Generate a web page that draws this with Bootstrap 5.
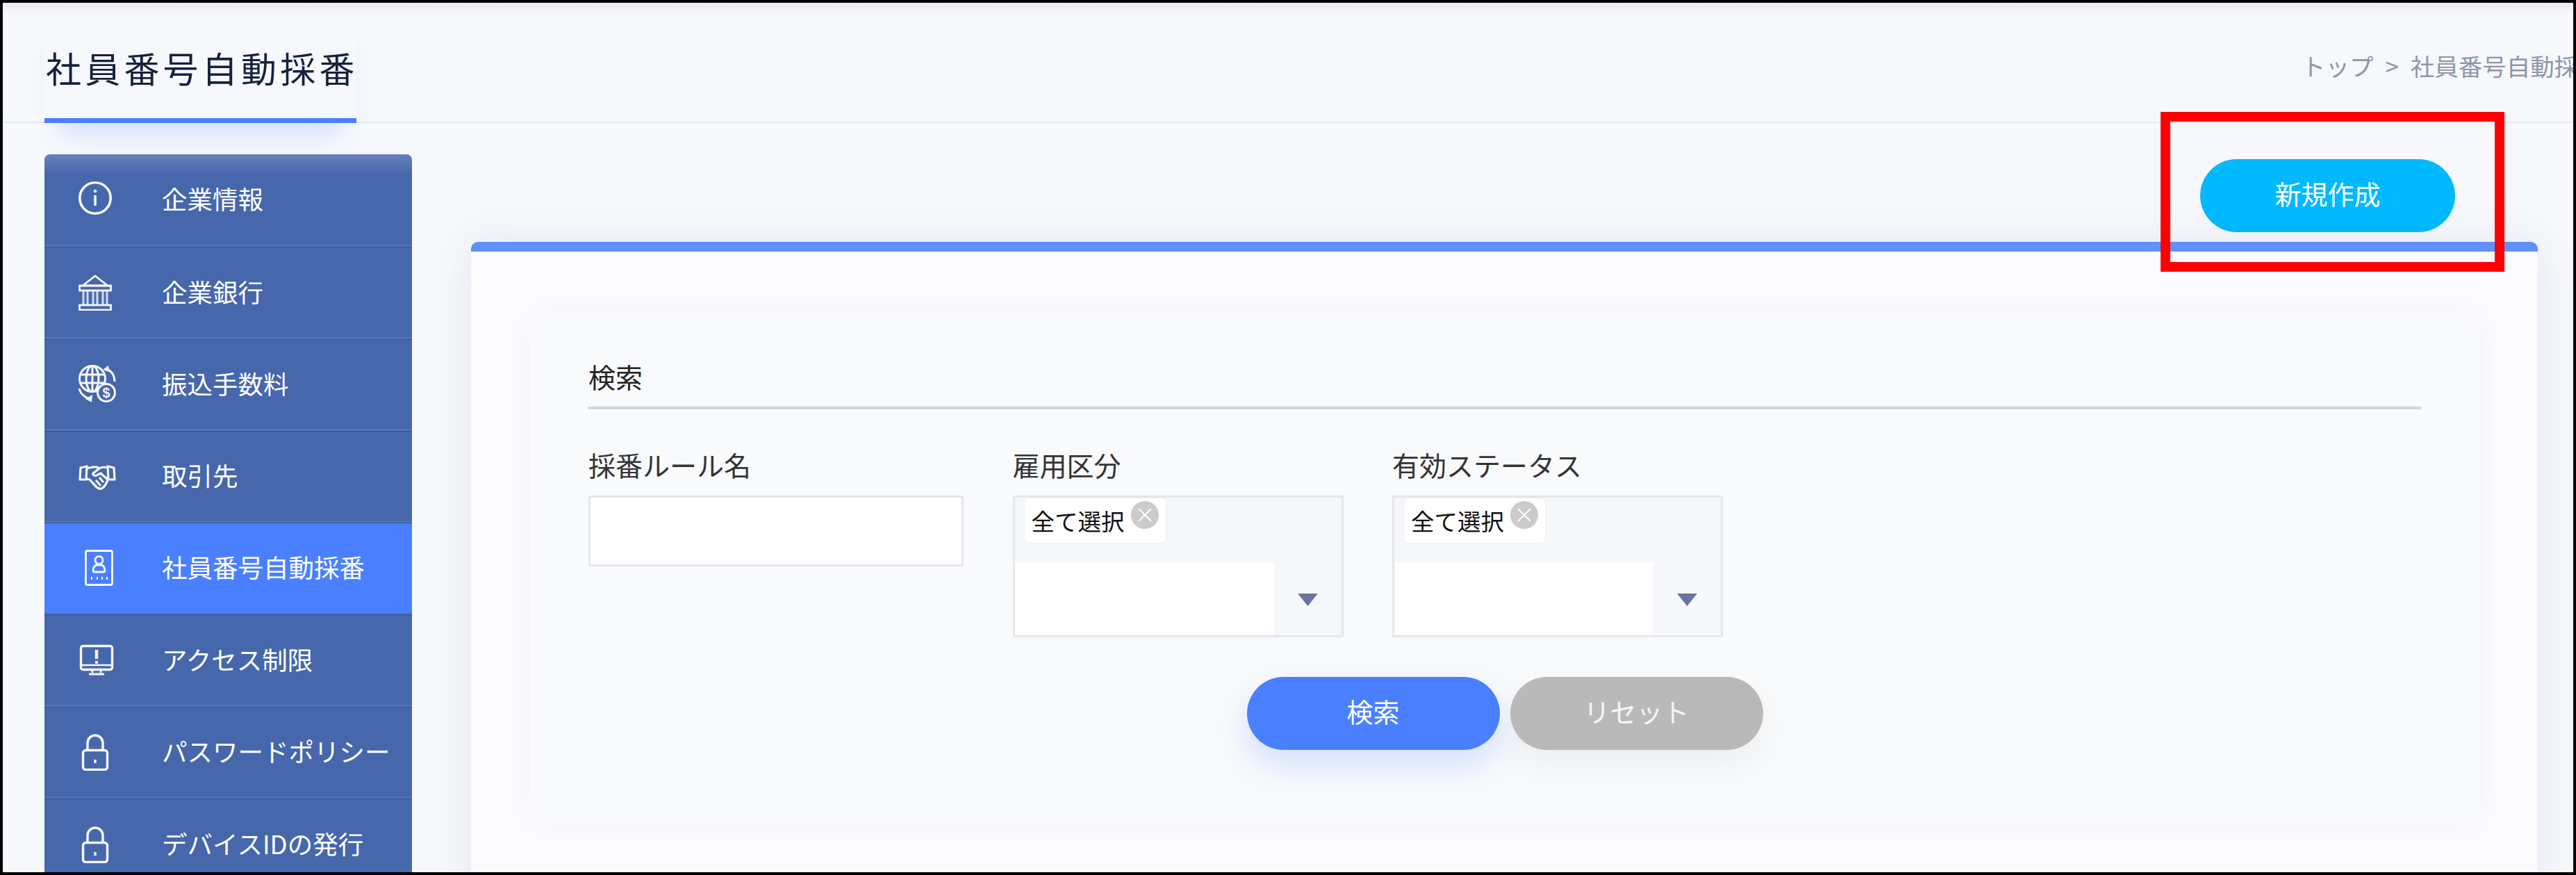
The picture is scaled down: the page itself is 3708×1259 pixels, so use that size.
<!DOCTYPE html>
<html lang="ja">
<head>
<meta charset="utf-8">
<title>社員番号自動採番</title>
<link href="https://cdn.jsdelivr.net/npm/bootstrap@5.3.0/dist/css/bootstrap.min.css" rel="stylesheet">
<style>
html,body{height:100%;margin:0;overflow:hidden;background:#000}
body{font-family:"Noto Sans CJK JP","Noto Sans",sans-serif;font-weight:400;color:#333}
.frame{height:100vh;border:4px solid #000;background:linear-gradient(#ecedf2,#f6f8fc 18px);overflow:hidden}
.top-bar{height:173px;border-bottom:2px solid #e4e8f1;padding-left:60px}
.page-title{height:173px;margin:0 0 -2px;padding:63px 4px 0 2px;width:449px;font-size:51px;font-weight:400;line-height:60px;letter-spacing:5.2px;white-space:nowrap;color:#16213e;border-bottom:7px solid #4a80ff;box-shadow:0 34px 36px -22px rgba(74,128,255,.22);flex:none}
.crumbs{width:391px;overflow:hidden;margin:8px 0 0 auto;flex:none}
.crumbs .breadcrumb{margin:0;flex-wrap:nowrap;white-space:nowrap;font-size:34.5px;line-height:48px;color:#8f96a9}
.crumbs .breadcrumb-item{color:#8f96a9;padding-left:0}
.crumbs .breadcrumb-item+.breadcrumb-item{padding-left:17px}
.crumbs .breadcrumb-item+.breadcrumb-item::before{content:">";color:#8f96a9;padding-right:17px;float:none}
.body-row{padding:45px 51px 0 60px}
.side-nav{width:529px;flex:none;border-radius:8px 8px 0 0;overflow:hidden}
.side-item{height:132.35px;padding:0 0 4px 49px;background:#4667ab;color:#fff;border:0;border-bottom:2px solid #34508f;box-shadow:inset 0 -3px 0 #5271b6;font-size:36.5px;line-height:1;font-weight:400;white-space:nowrap;border-radius:0}
.side-item:first-child{height:134.35px;background:linear-gradient(#6782bd,#4667ab 30px);border-radius:0}
.side-item.is-on{background:#4a80ff;box-shadow:none;border-bottom:3px solid #3f5f9f}
.side-ico{width:54px;height:54px;flex:none;margin-right:66px;color:#fff;filter:blur(.5px);opacity:.95}
.content-col{margin-left:85px;min-width:0}
.pill-btn{height:105px;width:364px;border:0;border-radius:53px;color:#fff;font-size:38px;font-weight:400;padding:0 0 8px;line-height:1}
.pill-btn:hover,.pill-btn:active{color:#fff}
.new-wrap{margin:7px 119px 14px 0}
.btn-new{width:367px;background:#00b9ff}
.btn-new:hover{background:#00b9ff}
.red-mark{position:absolute;z-index:2;left:-57px;right:-71px;top:-68px;bottom:-57px;border:14px solid #f00;pointer-events:none}
.main-card{border:0;border-top:14px solid #5f90fb;border-radius:10px 10px 0 0;background:#fbfbfd;padding:85px 83px 0 84px;box-shadow:0 0 60px rgba(80,90,140,.1);height:1000px}
.search-panel{background:#f9fafc;border-radius:30px;padding:71px 85px 111px 85px;box-shadow:0 0 30px rgba(80,90,140,.045)}
.panel-head{font-size:39px;line-height:46px;padding-bottom:21px;border-bottom:4px solid #d2d3de;font-weight:400;margin:0;color:#222}
.field-row{margin-top:55px;gap:70.5px}
.field-label{font-size:39px;line-height:48px;margin:0 0 21px;white-space:nowrap;color:#333}
.text-box{width:540px;height:102px;border:3px solid #e6e7ec;border-radius:0;background:#fff}
.pick-box{width:476px;height:204px;border:3px solid #e6e7ec;background:#f5f7fb}
.pick-tag{height:64px;margin:1px 0 0 14px;padding-left:10px;gap:9px;background:#fff;border-radius:7px;box-shadow:0 0 3px rgba(0,0,0,.06);font-size:33.5px;font-weight:400;color:#111;white-space:nowrap;width:203px;align-self:flex-start}
.pick-x{width:40px;height:40px;margin-top:-16px;flex:none}
.pick-in{height:105px}
.pick-field{width:373px;background:#fff}
.pick-arrow{width:29px;height:18px;margin:2px auto 0}
.action-row{margin-top:57px;gap:15px}
.btn-find{background:#4a80ff;box-shadow:0 22px 50px rgba(74,128,255,.22)}
.btn-find:hover{background:#4a80ff}
.btn-reset{background:#b9b9b9;box-shadow:0 22px 50px rgba(0,0,0,.05);color:#f6f6f6}
.btn-reset:hover{background:#b9b9b9}
</style>
</head>
<body>
<div class="frame d-flex flex-column">
  <header class="top-bar d-flex align-items-center flex-none">
    <h1 class="page-title">社員番号自動採番</h1>
    <nav class="crumbs" aria-label="breadcrumb">
      <ol class="breadcrumb">
        <li class="breadcrumb-item">トップ</li>
        <li class="breadcrumb-item active">社員番号自動採番</li>
      </ol>
    </nav>
  </header>
  <div class="body-row d-flex flex-grow-1">
    <div class="side-nav list-group list-group-flush">
      <a class="list-group-item side-item d-flex align-items-center">
        <svg class="side-ico" viewBox="0 0 54 54" fill="none" stroke="currentColor" stroke-width="3.6"><circle cx="24" cy="25" r="22.2"/><circle cx="24" cy="15" r="2.3" fill="currentColor" stroke="none"/><path d="M24 21v15"/></svg>企業情報</a>
      <a class="list-group-item side-item d-flex align-items-center">
        <svg class="side-ico" viewBox="0 0 54 54" fill="none" stroke="currentColor" stroke-width="2.8"><path d="M24 4 42 18H6Z"/><rect x="1.5" y="18" width="45" height="7"/><path d="M7 25v21M13 25v21M21 25v21M27 25v21M35 25v21M41 25v21" stroke-width="3" opacity=".8"/><rect x="1.5" y="46" width="45" height="7"/></svg>企業銀行</a>
      <a class="list-group-item side-item d-flex align-items-center">
        <svg class="side-ico" viewBox="0 0 54 54" fill="none" stroke="currentColor" stroke-width="3"><circle cx="20" cy="20" r="18.5"/><ellipse cx="20" cy="20" rx="9" ry="18.5"/><path d="M2 14h36M2 26h36M20 2v36"/><circle cx="40" cy="40" r="12.5" fill="#4667ab"/><text x="40" y="47" font-family="Liberation Sans,sans-serif" font-size="20" font-weight="700" text-anchor="middle" fill="currentColor" stroke="none">$</text><path d="M41 6c7 3 11 10 11 18"/><path d="M35 7l8-6 1 9Z" fill="currentColor" stroke="none"/><path d="M1 34c2 8 9 14 17 15"/><path d="M20 43l-1 11-9-5Z" fill="currentColor" stroke="none"/></svg>振込手数料</a>
      <a class="list-group-item side-item d-flex align-items-center">
        <svg class="side-ico" viewBox="0 0 54 54" fill="none" stroke="currentColor" stroke-width="3.2" stroke-linejoin="round"><path d="M3 15l9-2-1 19H2Z"/><path d="M51 15l-9-2 1 19h9Z"/><path d="M12 16c5-1 9-3 14-2l4 2c3-2 8-2 12-1"/><path d="M30 16l-9 7c-1 2 2 4 5 3l6-3 10 9"/><path d="M11 31l5 1 8 9c3 3 6 5 9 4 3-1 6-5 9-12"/><path d="M20 36l6 6M25 33l7 8M30 29l6 7" stroke-width="2.8"/></svg>取引先</a>
      <a class="list-group-item side-item is-on d-flex align-items-center">
        <svg class="side-ico" viewBox="0 0 54 54" fill="none" stroke="currentColor" stroke-width="2.8"><rect x="10.5" y="3.5" width="38" height="49" rx="2.5"/><circle cx="29.500" cy="17" r="5.500"/><path d="M21 32c0-5 3-8 5-8h7c2 0 5 3 5 8 0 2-1 2-2 2H23c-1 0-2 0-2-2Z"/><path d="M18 43h2M26 43h2M33 43h2M40 43h2" stroke-width="4"/></svg>社員番号自動採番</a>
      <a class="list-group-item side-item d-flex align-items-center">
        <svg class="side-ico" viewBox="0 0 54 54" fill="none" stroke="currentColor" stroke-width="3.4" opacity=".75"><rect x="3.500" y="7.500" width="45" height="34" rx="3"/><path d="M5 35h42" stroke-width="2.500"/><path d="M20 42v4M32 42v4M15 48h22" stroke-width="2.800"/><path d="M26 13v13" stroke-width="4.500"/><circle cx="26" cy="31" r="2.300" fill="currentColor" stroke="none"/></svg>アクセス制限</a>
      <a class="list-group-item side-item d-flex align-items-center">
        <svg class="side-ico" viewBox="0 0 54 54" fill="none" stroke="currentColor" stroke-width="3.5"><path d="M13 24V14a11 11 0 0 1 22 0v10"/><rect x="6.500" y="24.500" width="35" height="28" rx="4"/><path d="M24 38v5" stroke-width="3.500"/></svg>パスワードポリシー</a>
      <a class="list-group-item side-item d-flex align-items-center">
        <svg class="side-ico" viewBox="0 0 54 54" fill="none" stroke="currentColor" stroke-width="3.5"><path d="M13 24V14a11 11 0 0 1 22 0v10"/><rect x="6.500" y="24.500" width="35" height="28" rx="4"/><path d="M24 38v5" stroke-width="3.500"/></svg>デバイスIDの発行</a>
    </div>
    <main class="content-col flex-grow-1">
      <div class="new-wrap d-flex justify-content-end">
        <div class="position-relative">
          <button type="button" class="btn pill-btn btn-new d-block">新規作成</button>
          <span class="red-mark"></span>
        </div>
      </div>
      <section class="card main-card">
        <div class="search-panel">
          <h2 class="panel-head">検索</h2>
          <div class="field-row d-flex">
            <div>
              <label class="field-label d-block">採番ルール名</label>
              <input type="text" class="form-control text-box">
            </div>
            <div>
              <label class="field-label d-block">雇用区分</label>
              <div class="pick-box d-flex flex-column justify-content-between">
                <span class="pick-tag d-flex align-items-center">全て選択<svg class="pick-x" viewBox="0 0 40 40"><circle cx="20" cy="20" r="20" fill="#cbcbcb"/><path d="M11 11l18 18M29 11 11 29" stroke="#fff" stroke-width="2"/></svg></span>
                <div class="pick-in d-flex align-items-center">
                  <div class="pick-field h-100"></div>
                  <svg class="pick-arrow" viewBox="0 0 29 18"><path d="M0 0h29L14.500 18Z" fill="#6b73a0"/></svg>
                </div>
              </div>
            </div>
            <div>
              <label class="field-label d-block">有効ステータス</label>
              <div class="pick-box d-flex flex-column justify-content-between">
                <span class="pick-tag d-flex align-items-center">全て選択<svg class="pick-x" viewBox="0 0 40 40"><circle cx="20" cy="20" r="20" fill="#cbcbcb"/><path d="M11 11l18 18M29 11 11 29" stroke="#fff" stroke-width="2"/></svg></span>
                <div class="pick-in d-flex align-items-center">
                  <div class="pick-field h-100"></div>
                  <svg class="pick-arrow" viewBox="0 0 29 18"><path d="M0 0h29L14.500 18Z" fill="#6b73a0"/></svg>
                </div>
              </div>
            </div>
          </div>
          <div class="action-row d-flex justify-content-center">
            <button type="button" class="btn pill-btn btn-find">検索</button>
            <button type="button" class="btn pill-btn btn-reset">リセット</button>
          </div>
        </div>
      </section>
    </main>
  </div>
</div>
<script src="https://cdn.jsdelivr.net/npm/bootstrap@5.3.0/dist/js/bootstrap.bundle.min.js"></script>
</body>
</html>
